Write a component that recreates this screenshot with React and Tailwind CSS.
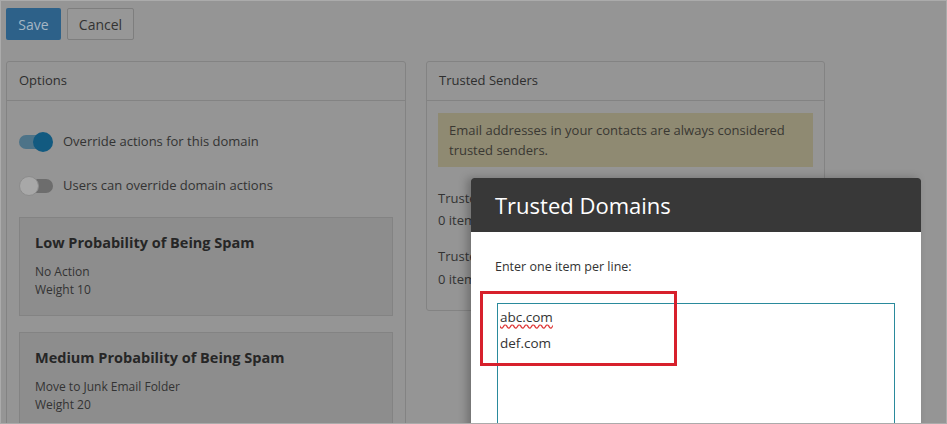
const font = { fontFamily: '"Open Sans", "Noto Sans", sans-serif' };

const Toggle = ({ on }) =>
  on ? (
    <span className="relative flex items-center w-[34px] h-5">
      <span className="w-[30px] h-[14px] rounded-full bg-[#4d7388]" />
      <span className="absolute right-0 w-5 h-5 rounded-full bg-[#125a80]" />
    </span>
  ) : (
    <span className="relative flex items-center w-[34px] h-5">
      <span className="ml-1 w-[30px] h-[14px] rounded-full bg-[#6d6d6d]" />
      <span className="absolute left-0 w-5 h-5 rounded-full bg-[#a8a8a8] border border-[#8c8c8c]" />
    </span>
  );

const ActionCard = ({ title, action, weight }) => (
  <div className="bg-[#8d8d8d] border border-[#838383] px-[15px] pt-[15px] pb-[16px]">
    <h3 className="text-[14.5px] leading-5 font-bold text-[#262626]">{title}</h3>
    <div className="mt-[10px] text-[12px] leading-[18px] text-[#333]">
      <div>{action}</div>
      <div>{weight}</div>
    </div>
  </div>
);

export default function App() {
  return (
    <div
      className="relative w-[947px] h-[424px] overflow-hidden bg-[#959595] border border-[#ababab] text-[#2e2e2e]"
      style={font}
    >
      <div className="flex gap-[6px] pl-[5px] pt-[7px]">
        <button className="h-8 w-[55px] rounded-[2px] bg-[#2d6189] text-[#a5b6c4] text-[14px]">Save</button>
        <button className="h-8 w-[67px] rounded-[2px] border border-[#7e7e7e] bg-[#979797] text-[#333] text-[14px]">
          Cancel
        </button>
      </div>

      <div className="flex items-start gap-5 pl-[5px] mt-[21px]">
        {/* options column */}
        <section className="w-[400px] rounded-[3px] border border-[#838383]">
          <div className="h-[39px] flex items-center px-[12px] border-b border-[#838383] text-[13px]">Options</div>
          <div className="px-[12px] pt-[31px]">
            <div className="flex items-center gap-[10px] text-[13px] text-[#333]">
              <Toggle on />
              <span>Override actions for this domain</span>
            </div>
            <div className="flex items-center gap-[10px] mt-6 text-[13px] text-[#333]">
              <Toggle />
              <span>Users can override domain actions</span>
            </div>
            <div className="mt-[21px] flex flex-col gap-4">
              <ActionCard title="Low Probability of Being Spam" action="No Action" weight="Weight 10" />
              <ActionCard
                title="Medium Probability of Being Spam"
                action="Move to Junk Email Folder"
                weight="Weight 20"
              />
            </div>
          </div>
        </section>

        {/* trusted senders column */}
        <section className="w-[399px] rounded-[3px] border border-[#838383] pb-[21px]">
          <div className="h-[39px] flex items-center px-[12px] border-b border-[#838383] text-[13px]">
            Trusted Senders
          </div>
          <div className="px-[11px] pt-[12px]">
            <div className="bg-[#8f8a72] px-[11px] py-[7px] text-[13px] leading-5 text-[#3a3832]">
              Email addresses in your contacts are always considered trusted senders.
            </div>
            <div className="mt-[21px] text-[13px] leading-5 text-[#333]">
              <div>Trusted</div>
              <div className="mt-[2px]">0 items</div>
              <div className="mt-4">Trusted</div>
              <div className="mt-[3px]">0 items</div>
            </div>
          </div>
        </section>
      </div>

      {/* dialog */}
      <div className="absolute left-[470px] top-[177px] w-[450px] h-[260px] bg-white rounded-t-[3px] shadow-[-4px_0_8px_rgba(0,0,0,0.25)]">
        <div className="h-[54px] flex items-center px-6 bg-[#383838] rounded-t-[3px] text-white text-[22px]">
          Trusted Domains
        </div>
        <div className="relative px-6 pt-[26px]">
          <p className="text-[12.5px] leading-[18px] text-[#333]">Enter one item per line:</p>
          <div className="mt-[27px] ml-[2px] w-[398px] h-[140px] border border-[#2a8a9c] px-[2px] text-[13.5px] leading-[26px] text-[#333]">
            <div>
              <span className="underline decoration-wavy decoration-[#d33] underline-offset-2">abc.com</span>
            </div>
            <div>def.com</div>
          </div>
          <div className="absolute left-[9px] top-[59px] w-[197px] h-[75px] border-[3px] border-[#d7202c]" />
        </div>
      </div>
    </div>
  );
}
